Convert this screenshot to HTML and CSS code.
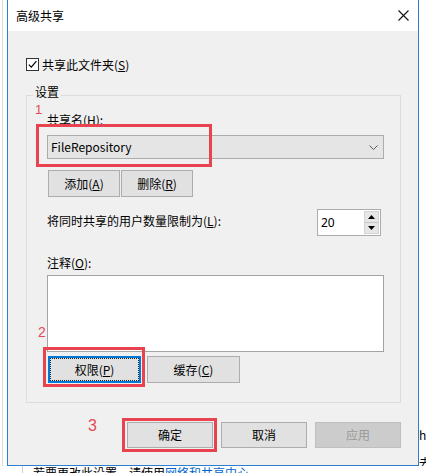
FILE: index.html
```html
<!DOCTYPE html>
<html lang="zh-CN">
<head>
<meta charset="utf-8">
<title>高级共享</title>
<link rel="stylesheet" href="styles.css">
</head>
<body>
<div class="screen">
  <div class="strip-left"></div>
  <div class="window">
    <div class="titlebar">
      <span class="title">高级共享</span>
      <svg class="close" width="11" height="11" viewBox="0 0 11 11"><path d="M0.5 0.5L10.5 10.5M10.5 0.5L0.5 10.5" stroke="#111" stroke-width="1.1" fill="none"/></svg>
    </div>
    <div class="body">
      <div class="check-row">
        <span class="checkbox"><svg width="11" height="11" viewBox="0 0 11 11"><polyline points="1.8,5.6 4.3,8.2 9.4,2.2" fill="none" stroke="#000" stroke-width="1.2"/></svg></span>
        <span>共享此文件夹(<u>S</u>)</span>
      </div>
      <fieldset class="group">
        <legend>设置</legend>
        <div class="group-body">
          <div class="label">共享名(<u>H</u>):</div>
          <div class="combo">
            <span class="combo-text">FileRepository</span>
            <svg width="9" height="5" viewBox="0 0 9 5"><path d="M0.5 0.5L4.5 4.5L8.5 0.5" fill="none" stroke="#5a5a5a" stroke-width="1"/></svg>
          </div>
          <div class="btn-row">
            <button class="btn btn-sm">添加(<u>A</u>)</button>
            <button class="btn btn-sm">删除(<u>R</u>)</button>
          </div>
          <div class="limit-row">
            <span class="label limit-label">将同时共享的用户数量限制为(<u>L</u>):</span>
            <div class="spin">
              <span class="spin-val">20</span>
              <div class="spin-btns">
                <span class="spin-btn"><svg width="7" height="4" viewBox="0 0 7 4"><polygon points="0,4 3.5,0 7,4" fill="#000"/></svg></span>
                <span class="spin-btn spin-down"><svg width="7" height="4" viewBox="0 0 7 4"><polygon points="0,0 3.5,4 7,0" fill="#000"/></svg></span>
              </div>
            </div>
          </div>
          <div class="label comment-label">注释(<u>O</u>):</div>
          <div class="textarea"></div>
          <div class="btn-row btn-row-2">
            <button class="btn btn-md btn-focus">权限(<u>P</u>)</button>
            <button class="btn btn-md">缓存(<u>C</u>)</button>
          </div>
        </div>
      </fieldset>
      <div class="dialog-buttons">
        <button class="btn btn-lg">确定</button>
        <button class="btn btn-lg">取消</button>
        <button class="btn btn-lg" disabled>应用</button>
      </div>
    </div>
    <span class="mark mark-1">1</span>
    <span class="mark mark-2">2</span>
    <span class="mark mark-3">3</span>
    <div class="hl hl-1"></div>
    <div class="hl hl-2"></div>
    <div class="hl hl-3"></div>
  </div>
  <div class="strip-right">
    <span class="bg-h">h</span>
    <span class="bg-q">去</span>
  </div>
</div>
<div class="below">若要更改此设置，请使用<span class="link">网络和共享中心</span>。</div>
</body>
</html>
```

FILE: styles.css
```css
html, body {
  margin: 0;
  padding: 0;
}
body {
  width: 426px;
  height: 473px;
  overflow: hidden;
  background: #fff;
  color: #000;
  font-family: "Noto Sans CJK SC", "Noto Sans", sans-serif;
  font-size: 12px;
}
u { text-decoration: underline; text-underline-offset: 1px; }

.screen {
  display: flex;
  height: 466px;
}
.strip-left {
  flex: none;
  width: 4px;
  margin-left: 2px;
  border-left: 1px solid #dadada;
}
.window {
  flex: none;
  width: 412px;
  box-sizing: border-box;
  border: 1px solid #2a7fcf;
  border-top: none;
  position: relative;
  display: flex;
  flex-direction: column;
}
.titlebar {
  flex: none;
  height: 31px;
  background: #fff;
  display: flex;
  align-items: center;
  justify-content: space-between;
  padding: 0 9px 0 8px;
}
.title { line-height: 16px; }

.body {
  flex: 1;
  background: #f0f0f0;
  padding: 26px 17px 0 18px;
}
.check-row {
  display: flex;
  align-items: center;
  gap: 3px;
  height: 15px;
  line-height: 16px;
}
.checkbox {
  width: 13px;
  height: 13px;
  box-sizing: border-box;
  border: 1px solid #333;
  background: #fff;
  display: flex;
}

.group {
  margin: 13px 0 0;
  padding: 0;
  border: 1px solid #dcdcdc;
  min-width: 0;
}
.group legend {
  margin-left: 6px;
  padding: 0 2px 6px;
  line-height: 14px;
}
.group-body {
  padding: 7px 16px 19px 20px;
}
.label { line-height: 16px; }
.combo {
  margin-top: 7px;
  height: 24px;
  box-sizing: border-box;
  border: 1px solid #acacac;
  background: #e5e5e5;
  display: flex;
  align-items: center;
  justify-content: space-between;
  padding: 0 5px 0 3px;
}
.combo-text { line-height: 16px; }

.btn-row {
  display: flex;
  gap: 1px;
  margin-top: 11px;
  padding-left: 1px;
}
.btn {
  font: inherit;
  color: #000;
  box-sizing: border-box;
  border: 1px solid #adadad;
  background: #e1e1e1;
  padding: 0;
  margin: 0;
  display: flex;
  align-items: center;
  justify-content: center;
  line-height: 16px;
}
.btn-sm { width: 72px; height: 27px; }
.btn-md { width: 93px; height: 27px; }
.btn-lg { width: 86px; height: 26px; }
.btn-focus {
  border-color: #0078d7;
  box-shadow: inset 0 0 0 1px #0078d7;
  outline: 1px dotted #222;
  outline-offset: -3px;
}
.btn:disabled {
  background: #cccccc;
  border-color: #bfbfbf;
  color: #9a9a9a;
}

.limit-row {
  display: flex;
  justify-content: space-between;
  align-items: flex-start;
  margin-top: 12px;
  padding-right: 3px;
}
.limit-label { margin-top: 4px; }
.spin {
  width: 64px;
  height: 27px;
  box-sizing: border-box;
  border: 1px solid #acacac;
  background: #fff;
  display: flex;
}
.spin-val {
  flex: 1;
  padding-left: 3px;
  line-height: 25px;
  font-family: "Noto Sans", sans-serif;
  font-size: 12px;
}
.spin-btns {
  width: 15px;
  margin: 1px 1px 1px 0;
  display: flex;
  flex-direction: column;
  border: 1px solid #d4d4d4;
  box-sizing: border-box;
}
.spin-btn {
  flex: 1;
  background: #e6e6e6;
  display: flex;
  align-items: center;
  justify-content: center;
}
.spin-down { border-top: 1px solid #c4c4c4; }

.comment-label { margin-top: 19px; }
.textarea {
  margin-top: 4px;
  height: 77px;
  box-sizing: border-box;
  border: 1px solid #a3a3a3;
  background: #fff;
}
.btn-row-2 {
  margin-top: 4px;
  gap: 6px;
}

.dialog-buttons {
  display: flex;
  justify-content: flex-end;
  gap: 8px;
  margin-top: 19px;
}

/* annotations drawn over the dialog */
.mark {
  position: absolute;
  color: #e24a56;
  font-family: "Liberation Sans", sans-serif;
  line-height: 1;
}
.mark-1 { left: 27px; top: 103px; font-size: 13px; }
.mark-2 { left: 30px; top: 325px; font-size: 14px; }
.mark-3 { left: 80px; top: 418px; font-size: 16px; }
.hl {
  position: absolute;
  box-sizing: border-box;
  border: 3px solid #e8434f;
}
.hl-1 { left: 28px; top: 124px; width: 176px; height: 43px; }
.hl-2 { left: 35px; top: 347px; width: 102px; height: 40px; }
.hl-3 { left: 114px; top: 418px; width: 95px; height: 34px; }

.strip-right {
  flex: 1;
  display: flex;
  flex-direction: column;
  padding-top: 427px;
  line-height: 16px;
  overflow: hidden;
}
.bg-q { margin-top: 12px; }

.below {
  margin-left: 22px;
  border-left: 1px solid #d0d0d0;
  padding-left: 10px;
  line-height: 13px;
  height: 7px;
  overflow: hidden;
}
.link {
  color: #0066cc;
  text-decoration: underline;
}
```
